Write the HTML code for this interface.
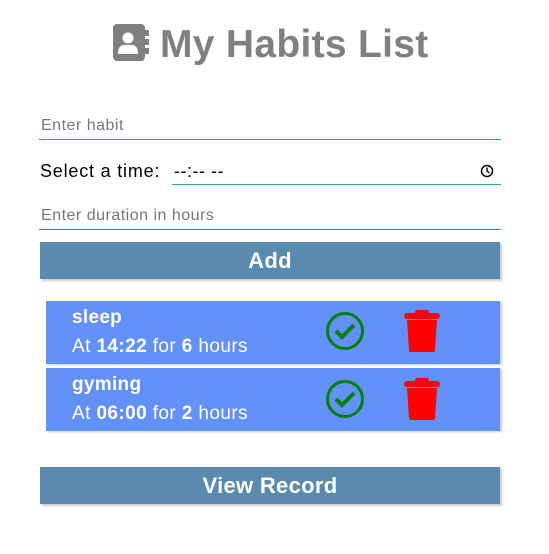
<!DOCTYPE html>
<html><head><style>
body{margin:0;width:549px;height:554px;background:#fff;font-family:"Liberation Sans",sans-serif;position:relative;overflow:hidden}
.a{position:absolute}
.ph{color:#777;font-size:16px;letter-spacing:0.5px}
.line{height:1px;background:#26a69a}
.btn{background:#5a8aad;color:#fff;font-weight:bold;font-size:22px;text-align:center;box-shadow:2px 2px 2px #ccc;letter-spacing:0.3px}
.item{left:46px;width:454px;height:63px;background:#6291fb;color:#fff;box-shadow:2px 1px 2px #ccc}
.item .n{position:absolute;left:26px;top:6px;font-weight:bold;font-size:19px;letter-spacing:0.3px}
.item .t{position:absolute;left:26px;top:35px;font-size:19px;letter-spacing:0.4px}
</style></head><body>
<svg class="a" style="left:113px;top:24px" width="36" height="37" viewBox="0 0 36 37">
<rect x="0" y="0" width="32" height="37" rx="4" fill="#808080"/>
<rect x="32" y="6" width="4" height="6" fill="#808080"/><rect x="32" y="15" width="4" height="6" fill="#808080"/><rect x="32" y="24" width="4" height="6" fill="#808080"/>
<circle cx="15" cy="14" r="5.5" fill="#fff"/>
<path d="M5 30 Q5 21 11 21 L19 21 Q25 21 25 30 Z" fill="#fff"/>
</svg>
<div class="a" style="left:160px;top:23px;font-size:39px;font-weight:bold;color:#808080;letter-spacing:0.3px">My Habits List</div>
<div class="a ph" style="left:41px;top:117px">Enter habit</div>
<div class="a line" style="left:39px;top:139px;width:462px"></div>
<div class="a" style="left:40px;top:161px;font-size:18px;color:#000;letter-spacing:0.8px">Select a time:</div>
<div class="a" style="left:174px;top:161px;font-size:18px;color:#000;letter-spacing:0.5px">--:-- --</div>
<svg class="a" style="left:480px;top:164px" width="14" height="14" viewBox="0 0 14 14"><circle cx="7" cy="7" r="5.5" fill="none" stroke="#000" stroke-width="1.5"/><path d="M7 3.5V7L9.5 9" fill="none" stroke="#000" stroke-width="1.4"/></svg>
<div class="a line" style="left:172px;top:184px;width:329px"></div>
<div class="a ph" style="left:41px;top:207px">Enter duration in hours</div>
<div class="a line" style="left:39px;top:229px;width:462px"></div>
<div class="a btn" style="left:40px;top:242px;width:460px;height:37px;line-height:37px">Add</div>
<div class="a item" style="top:301px"><div class="n">sleep</div><div class="t">At <b>14:22</b> for <b>6</b> hours</div></div>
<div class="a item" style="top:368px"><div class="n">gyming</div><div class="t">At <b>06:00</b> for <b>2</b> hours</div></div>
<svg class="a" style="left:325px;top:311px" width="40" height="40" viewBox="0 0 40 40"><circle cx="20" cy="20" r="17.5" fill="none" stroke="#008000" stroke-width="3"/><path d="M11 20l6 6 12-12" fill="none" stroke="#008000" stroke-width="4"/></svg>
<svg class="a" style="left:325px;top:379px" width="40" height="40" viewBox="0 0 40 40"><circle cx="20" cy="20" r="17.5" fill="none" stroke="#008000" stroke-width="3"/><path d="M11 20l6 6 12-12" fill="none" stroke="#008000" stroke-width="4"/></svg>
<svg class="a" style="left:404px;top:310px" width="36" height="42" viewBox="0 0 36 42"><rect x="0" y="3" width="36" height="6" rx="3" fill="#f00"/><rect x="11" y="0" width="14" height="5" rx="2" fill="#f00"/><path d="M3 10H33L31 40Q31 42 29 42H7Q5 42 5 40Z" fill="#f00"/></svg>
<svg class="a" style="left:404px;top:378px" width="36" height="42" viewBox="0 0 36 42"><rect x="0" y="3" width="36" height="6" rx="3" fill="#f00"/><rect x="11" y="0" width="14" height="5" rx="2" fill="#f00"/><path d="M3 10H33L31 40Q31 42 29 42H7Q5 42 5 40Z" fill="#f00"/></svg>
<div class="a btn" style="left:40px;top:467px;width:460px;height:37px;line-height:37px">View Record</div>
</body></html>
